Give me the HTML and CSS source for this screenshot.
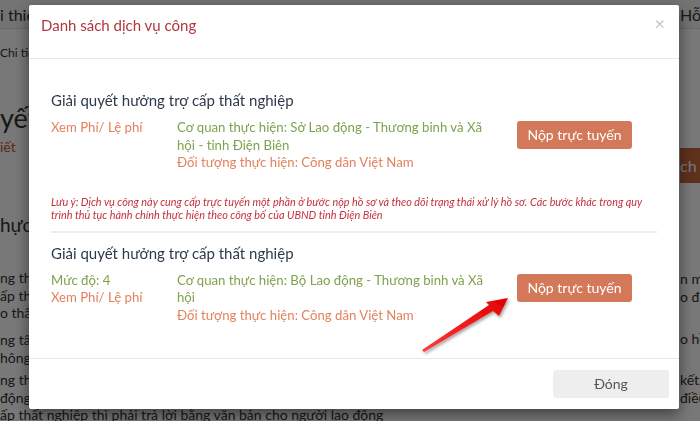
FILE: index.html
```html
<!DOCTYPE html>
<html lang="vi">
<head>
<meta charset="utf-8">
<title>Danh sách dịch vụ công</title>
<link rel="stylesheet" href="styles.css">
</head>
<body>
<div class="page">
  <div class="col-left">
    <div class="bg-header"><span class="clip">i thiệu</span></div>
    <div class="bg-crumb clip">Chi tiết</div>
    <div class="bg-h1 clip">yết</div>
    <div class="bg-sub clip">iết</div>
    <div class="bg-h2 clip">hực hiện</div>
    <div class="bg-para p1 clip">
      <div>ng thông</div>
      <div>ấp thất</div>
      <div>o thất</div>
    </div>
    <div class="bg-para p2 clip">
      <div>ng tấm</div>
      <div>hông</div>
    </div>
    <div class="bg-para p3">
      <div class="clip">ng thông</div>
      <div class="clip">động</div>
      <div>ấp thất nghiệp thì phải trả lời bằng văn bản cho người lao động</div>
    </div>
  </div>
  <div class="col-right">
    <div class="bg-header">Hỗ trợ</div>
    <div class="bg-btn">ch của</div>
    <div class="bg-para r1">
      <div>n m</div>
      <div>o đ</div>
    </div>
    <div class="bg-para r2">
      <div>o hồ</div>
    </div>
    <div class="bg-para r3">
      <div>kết, t</div>
      <div>điều</div>
    </div>
  </div>
</div>
<div class="overlay"></div>

<div class="modal">
  <div class="modal-header">
    <div class="modal-title">Danh sách dịch vụ công</div>
    <div class="modal-close">×</div>
  </div>
  <div class="modal-body">
    <div class="item">
      <div class="item-title">Giải quyết hưởng trợ cấp thất nghiệp</div>
      <div class="item-row">
        <div class="item-meta">
          <div class="orange">Xem Phí/ Lệ phí</div>
        </div>
        <div class="item-info">
          <div class="green">Cơ quan thực hiện: Sở Lao động - Thương binh và Xã hội - tỉnh Điện Biên</div>
          <div class="orange">Đối tượng thực hiện: Công dân Việt Nam</div>
        </div>
        <div class="btn-submit">Nộp trực tuyến</div>
      </div>
      <div class="note">Lưu ý: Dịch vụ công này cung cấp trực tuyến một phần ở bước nộp hồ sơ và theo dõi trạng thái xử lý hồ sơ. Các bước khác trong quy trình thủ tục hành chính thực hiện theo công bố của UBND tỉnh Điện Biên</div>
    </div>
    <div class="item item-second">
      <div class="item-title">Giải quyết hưởng trợ cấp thất nghiệp</div>
      <div class="item-row">
        <div class="item-meta">
          <div class="green">Mức độ: 4</div>
          <div class="orange">Xem Phí/ Lệ phí</div>
        </div>
        <div class="item-info">
          <div class="green">Cơ quan thực hiện: Bộ Lao động - Thương binh và Xã hội</div>
          <div class="orange">Đối tượng thực hiện: Công dân Việt Nam</div>
        </div>
        <div class="btn-submit">Nộp trực tuyến</div>
      </div>
    </div>
  </div>
  <div class="modal-footer">
    <div class="btn-close">Đóng</div>
  </div>
</div>

<svg class="arrow" width="700" height="421" viewBox="0 0 700 421">
  <defs>
    <linearGradient id="ag" x1="0" y1="1" x2="1" y2="0">
      <stop offset="0" stop-color="#ff3a3a"/>
      <stop offset="1" stop-color="#e00000"/>
    </linearGradient>
    <filter id="sh" x="-20%" y="-20%" width="140%" height="140%">
      <feDropShadow dx="1.5" dy="2" stdDeviation="1.5" flood-color="#000" flood-opacity="0.35"/>
    </filter>
  </defs>
  <polygon filter="url(#sh)" fill="url(#ag)" points="422,350 489,305 486,302 508,298 499,316 493,311 424,352"/>
</svg>
</body>
</html>
```

FILE: styles.css
```css
* { box-sizing: border-box; }
html, body { margin: 0; padding: 0; }
body {
  width: 700px;
  height: 421px;
  overflow: hidden;
  font-family: Lato, "Open Sans", "Noto Sans", sans-serif;
  background: #fff;
  color: #333;
}

/* background page */
.page {
  display: grid;
  grid-template-columns: 680px 20px;
  height: 421px;
}
.col-left, .col-right {
  white-space: nowrap;
  display: flex;
  flex-direction: column;
}
.col-right { overflow: hidden; }
.clip {
  display: block;
  width: 29px;
  overflow: hidden;
}
.bg-header {
  height: 29px;
  line-height: 29px;
  font-size: 16px;
  border-bottom: 1px solid #e0e0e0;
  background: #f5f5f5;
}
.bg-crumb {
  font-size: 12px;
  line-height: 16px;
  margin-top: 16px;
}
.bg-h1 {
  font-size: 27px;
  line-height: 34px;
  margin-top: 40px;
}
.bg-sub {
  font-size: 14px;
  line-height: 18px;
  color: #c0562f;
  margin-top: 3px;
}
.bg-h2 {
  font-size: 19px;
  line-height: 24px;
  margin-top: 57px;
}
.bg-para {
  font-size: 14px;
  line-height: 17.5px;
}
.p1 { margin-top: 32px; }
.p2 { margin-top: 9.5px; }
.p3 { margin-top: 5px; }

.bg-btn {
  margin-top: 119px;
  height: 35px;
  line-height: 35px;
  background: #c8683d;
  color: #fff;
  font-size: 16px;
}
.r1 { margin-top: 87px; }
.r2 { margin-top: 25px; }
.r3 { margin-top: 23.5px; }

.overlay {
  position: fixed;
  inset: 0;
  background: rgba(0, 0, 0, 0.53);
}

/* modal */
.modal {
  position: fixed;
  left: 29px;
  top: 5px;
  width: 650px;
  height: 404px;
  background: #fff;
  box-shadow: 0 5px 15px rgba(0, 0, 0, 0.5);
  display: flex;
  flex-direction: column;
  border-radius: 2px;
}
.modal-header {
  height: 54px;
  padding: 9px 14px 0 12px;
  border-bottom: 1px solid #e8e8e8;
  display: flex;
  justify-content: space-between;
  align-items: flex-start;
}
.modal-title {
  font-size: 15px;
  line-height: 22px;
  color: #b0383d;
}
.modal-close {
  font-size: 18px;
  line-height: 18px;
  color: #c4c4c4;
}
.modal-body {
  flex: 1;
  padding: 31px 22px 0 22px;
}
.item-title {
  font-size: 15px;
  line-height: 20px;
  color: #2d3a4b;
  margin-bottom: 9px;
}
.item-row {
  display: grid;
  grid-template-columns: 126px 340px 115px;
  font-size: 13.2px;
  line-height: 17.5px;
  align-items: start;
}
.item-info { padding-right: 24px; }
.orange { color: #e2825f; }
.green { color: #7fa24d; }
.btn-submit {
  margin-top: 2px;
  height: 28px;
  line-height: 28px;
  text-align: center;
  background: #d3795a;
  color: #fff;
  font-size: 14px;
  border-radius: 3px;
}
.note {
  margin-top: 23px;
  font-size: 10.85px;
  line-height: 13px;
  font-style: italic;
  color: #c3303c;
  padding-bottom: 10px;
  border-bottom: 2px solid #ececec;
}
.item-second { margin-top: 10px; }
.modal-footer {
  border-top: 1px solid #e8e8e8;
  padding: 11px 10px 11px 0;
  display: flex;
  justify-content: flex-end;
}
.btn-close {
  width: 116px;
  height: 28px;
  line-height: 28px;
  text-align: center;
  background: #eeeeee;
  color: #555;
  font-size: 14px;
  border-radius: 3px;
}

.arrow {
  position: fixed;
  left: 0;
  top: 0;
  pointer-events: none;
}
```
